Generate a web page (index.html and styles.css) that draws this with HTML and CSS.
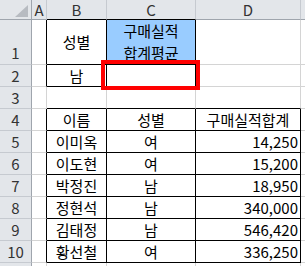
FILE: index.html
```html
<!DOCTYPE html>
<html lang="ko">
<head>
<meta charset="utf-8">
<link rel="stylesheet" href="styles.css">
</head>
<body>
<div class="wrap">
  <div class="sheet">
    <div class="ch corner"><svg width="31" height="19" viewBox="0 0 31 19"><polygon points="28,5 28,17 15,17" fill="#b7bbc1"/></svg></div>
    <div class="ch">A</div>
    <div class="ch kb">B</div>
    <div class="ch kb">C</div>
    <div class="ch">D</div>
    <div class="ch"></div>

    <div class="rh tall">1</div>
    <div class="c kr"></div>
    <div class="c k">성별</div>
    <div class="c k blue">구매실적<br>합계평균</div>
    <div class="c"></div>
    <div class="c"></div>

    <div class="rh">2</div>
    <div class="c kr"></div>
    <div class="c k">남</div>
    <div class="c k"></div>
    <div class="c"></div>
    <div class="c"></div>

    <div class="rh">3</div>
    <div class="c"></div>
    <div class="c kb"></div>
    <div class="c kb"></div>
    <div class="c kb"></div>
    <div class="c"></div>

    <div class="rh">4</div>
    <div class="c kr"></div>
    <div class="c k">이름</div>
    <div class="c k">성별</div>
    <div class="c k">구매실적합계</div>
    <div class="c"></div>

    <div class="rh">5</div>
    <div class="c kr"></div>
    <div class="c k">이미옥</div>
    <div class="c k">여</div>
    <div class="c k num">14,250</div>
    <div class="c"></div>

    <div class="rh">6</div>
    <div class="c kr"></div>
    <div class="c k">이도현</div>
    <div class="c k">여</div>
    <div class="c k num">15,200</div>
    <div class="c"></div>

    <div class="rh">7</div>
    <div class="c kr"></div>
    <div class="c k">박정진</div>
    <div class="c k">남</div>
    <div class="c k num">18,950</div>
    <div class="c"></div>

    <div class="rh">8</div>
    <div class="c kr"></div>
    <div class="c k">정현석</div>
    <div class="c k">남</div>
    <div class="c k num">340,000</div>
    <div class="c"></div>

    <div class="rh">9</div>
    <div class="c kr"></div>
    <div class="c k">김태정</div>
    <div class="c k">남</div>
    <div class="c k num">546,420</div>
    <div class="c"></div>

    <div class="rh">10</div>
    <div class="c kr"></div>
    <div class="c k">황선철</div>
    <div class="c k">여</div>
    <div class="c k num">336,250</div>
    <div class="c"></div>

    <div class="rh"></div>
    <div class="c"></div>
    <div class="c"></div>
    <div class="c"></div>
    <div class="c"></div>
    <div class="c"></div>
  </div>
  <div class="highlight"></div>
</div>
</body>
</html>
```

FILE: styles.css
```css
html, body {
  margin: 0;
  padding: 0;
  overflow: hidden;
  background: #fff;
}
.wrap {
  position: relative;
  width: 305px;
  height: 266px;
  overflow: hidden;
}
.sheet {
  display: grid;
  grid-template-columns: 32px 15px 60px 89px 105px 40px;
  grid-template-rows: 20px 45px repeat(10, 22px);
  font-family: "Noto Sans CJK KR", "Noto Sans", sans-serif;
  font-size: 15px;
  color: #000;
}
.sheet > div {
  box-sizing: border-box;
  border-right: 1px solid #d4d4d4;
  border-bottom: 1px solid #d4d4d4;
  display: flex;
  align-items: center;
  justify-content: center;
  line-height: 20px;
  white-space: nowrap;
  overflow: hidden;
}
.ch {
  background: #e3e6ea;
  border-right-color: #c6cad0 !important;
  border-bottom-color: #9fa5ad !important;
  color: #333;
  padding-top: 1px;
}
.corner {
  padding: 0 !important;
  align-items: stretch !important;
  justify-content: flex-start !important;
  border-right-color: #9fa5ad !important;
}
.corner svg { display: block; }
.rh {
  background: #e3e6ea;
  border-right-color: #9fa5ad !important;
  border-bottom-color: #c6cad0 !important;
  color: #333;
}
.sheet > .tall {
  align-items: flex-end;
  padding-bottom: 1px;
}
.ch.kb { border-bottom-color: #000 !important; }
.c.kb { border-bottom-color: #000; }
.kr { border-right-color: #000 !important; }
.k {
  border-right-color: #000 !important;
  border-bottom-color: #000 !important;
}
.sheet > .blue {
  background: #99ccff;
  white-space: normal;
  text-align: center;
  line-height: 22px;
}
.num {
  justify-content: flex-end !important;
  padding-right: 2px;
}
.highlight {
  position: absolute;
  left: 101px;
  top: 60px;
  width: 99px;
  height: 30px;
  box-sizing: border-box;
  border: 4px solid #ff0000;
}
```
